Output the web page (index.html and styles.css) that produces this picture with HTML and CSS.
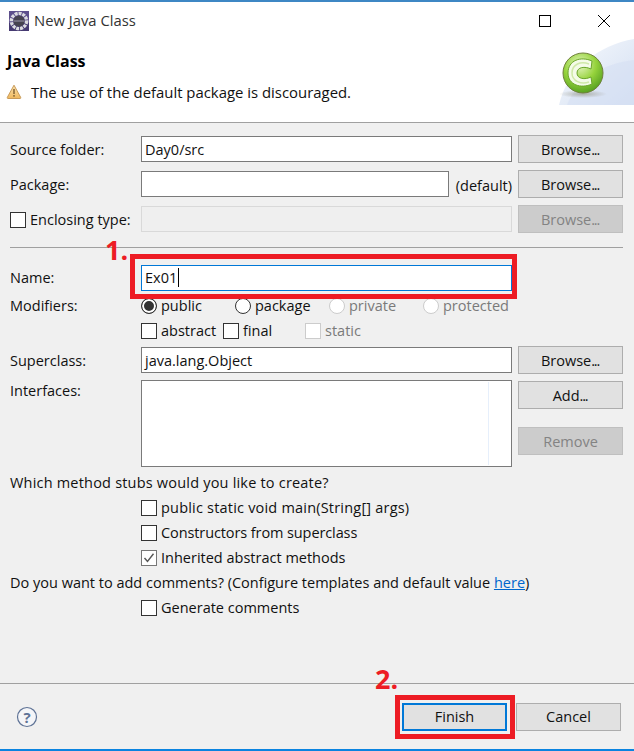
FILE: index.html
```html
<!DOCTYPE html>
<html lang="en">
<head>
<meta charset="utf-8">
<title>New Java Class</title>
<link rel="stylesheet" href="styles.css">
</head>
<body>
<div class="dialog">
  <div class="titlebar">
    <svg class="app-icon" width="20" height="20" viewBox="0 0 20 20">
      <rect width="20" height="20" fill="#5d4f8c"/>
      <rect y="12" width="20" height="8" fill="#463a72"/>
      <circle cx="10" cy="10" r="7.6" fill="none" stroke="#dcdce0" stroke-width="3.4" stroke-dasharray="3 0.9"/>
      <circle cx="10" cy="10" r="5.6" fill="#46434f"/>
      <rect x="4.5" y="9.5" width="11" height="1" fill="#9a96ac"/>
    </svg>
    <span class="title">New Java Class</span>
    <div class="win-controls">
      <svg width="14" height="14" viewBox="0 0 14 14"><rect x="1.5" y="1.5" width="11" height="11" fill="none" stroke="#000" stroke-width="1"/></svg>
      <svg width="14" height="14" viewBox="0 0 14 14"><path d="M1 1 L13 13 M13 1 L1 13" stroke="#000" stroke-width="1"/></svg>
    </div>
  </div>
  <header class="banner">
    <h1 class="banner-title">Java Class</h1>
    <div class="message">
      <svg width="16" height="16" viewBox="0 0 16 16">
        <defs><linearGradient id="warn" x1="0" y1="0" x2="0" y2="1"><stop offset="0" stop-color="#fbe3b0"/><stop offset="1" stop-color="#efb75c"/></linearGradient></defs>
        <path d="M8 1.2 L14.7 13.4 Q15 14.5 14 14.5 H2 Q1 14.5 1.3 13.4 Z" fill="url(#warn)" stroke="#c89a58" stroke-width="1"/>
        <rect x="7.2" y="5" width="1.6" height="5" fill="#8a6a3a"/>
        <rect x="7.2" y="11" width="1.6" height="1.7" fill="#8a6a3a"/>
      </svg>
      <span>The use of the default package is discouraged.</span>
    </div>
    <svg class="banner-art" width="75" height="67" viewBox="0 0 75 67">
      <defs>
        <linearGradient id="wash" x1="0" y1="0" x2="1" y2="1"><stop offset="0" stop-color="#f8fafd"/><stop offset="1" stop-color="#d3dff2"/></linearGradient>
        <radialGradient id="ball" cx="0.42" cy="0.3" r="0.8"><stop offset="0" stop-color="#e6f6c4"/><stop offset="0.5" stop-color="#96d33c"/><stop offset="1" stop-color="#45931a"/></radialGradient>
        <radialGradient id="shadow"><stop offset="0" stop-color="#9a9a8c" stop-opacity=".7"/><stop offset="1" stop-color="#9a9a8c" stop-opacity="0"/></radialGradient>
      </defs>
      <path d="M0 66 C8 30 40 6 75 0 V66 Z" fill="url(#wash)"/>
      <path d="M8 66 C18 40 45 24 75 21 V66 Z" fill="#d5e0f3" opacity=".6"/>
      <ellipse cx="24" cy="55" rx="24" ry="4" fill="url(#shadow)"/>
      <circle cx="24" cy="34" r="20" fill="url(#ball)" stroke="#6f7f3c" stroke-width="1"/>
      <path d="M33 22 C22 17 9 21 9 34 C9 46 22 50 33 45 L32 38 C26 41 18 40 18 34 C18 28 26 27 32 30 Z" fill="#f4fbe8" stroke="#6aa52a" stroke-width="1"/>
      <path d="M30 25 C22 22 13 25 13 34 C13 42 22 46 30 43" fill="none" stroke="#cfe9a8" stroke-width="1.5"/>
    </svg>
  </header>

  <main class="content">
    <div class="row row-first">
      <span class="label">Source folder:</span>
      <div class="field">Day0/src</div>
      <div class="btn">Browse<span class="dots">...</span></div>
    </div>
    <div class="row">
      <span class="label">Package:</span>
      <div class="field-split">
        <div class="field field-fill"></div>
        <span class="suffix">(default)</span>
      </div>
      <div class="btn">Browse<span class="dots">...</span></div>
    </div>
    <div class="row">
      <label class="label label-check"><span class="check"></span>Enclosing type:</label>
      <div class="field field-disabled"></div>
      <div class="btn btn-disabled">Browse<span class="dots">...</span></div>
    </div>
    <hr class="sep">
    <div class="row row-name">
      <span class="label label-flat">Name:</span>
      <div class="field field-focus">Ex01<span class="caret"></span></div>
    </div>
    <div class="row row-short row-mod">
      <span class="label label-flat">Modifiers:</span>
      <div class="options options-radio">
        <span class="opt"><span class="radio radio-on"></span>public</span>
        <span class="opt"><span class="radio"></span>package</span>
        <span class="opt opt-off"><span class="radio"></span>private</span>
        <span class="opt opt-off"><span class="radio"></span>protected</span>
      </div>
    </div>
    <div class="row row-short">
      <span></span>
      <div class="options options-check">
        <span class="opt"><span class="check"></span>abstract</span>
        <span class="opt"><span class="check"></span>final</span>
        <span class="opt opt-off"><span class="check"></span>static</span>
      </div>
    </div>
    <div class="row row-super">
      <span class="label">Superclass:</span>
      <div class="field">java.lang.Object</div>
      <div class="btn">Browse<span class="dots">...</span></div>
    </div>
    <div class="row row-iface">
      <span class="label label-top">Interfaces:</span>
      <div class="field field-list"><span class="list-rule"></span></div>
      <div class="btn-col">
        <div class="btn">Add<span class="dots">...</span></div>
        <div class="btn btn-disabled">Remove</div>
      </div>
    </div>
    <div class="line line-wide">Which method stubs would you like to create?</div>
    <div class="line line-opt line-wide"><span class="opt"><span class="check"></span>public static void main(String[] args)</span></div>
    <div class="line line-opt line-tight"><span class="opt"><span class="check"></span>Constructors from superclass</span></div>
    <div class="line line-opt"><span class="opt"><span class="check check-on"><svg width="14" height="14" viewBox="0 0 14 14"><path d="M2.5 7 L5.5 10.5 L11.5 2.8" fill="none" stroke="#555" stroke-width="1.4"/></svg></span>Inherited abstract methods</span></div>
    <div class="line">Do you want to add comments? (Configure templates and default value <a class="link" href="#">here</a>)</div>
    <div class="line line-opt"><span class="opt"><span class="check"></span>Generate comments</span></div>
  </main>

  <footer class="footer">
    <svg width="22" height="22" viewBox="0 0 22 22">
      <circle cx="11" cy="11" r="9.5" fill="#f4f5f8" stroke="#5f7396" stroke-width="1.2"/>
      <text class="help-mark" x="11" y="16.5" text-anchor="middle">?</text>
    </svg>
    <div class="footer-btns">
      <div class="btn btn-default">Finish</div>
      <div class="btn">Cancel</div>
    </div>
  </footer>

  <div class="mark mark-one">1.</div>
  <div class="box box-one"></div>
  <div class="mark mark-two">2.</div>
  <div class="box box-two"></div>
</div>
</body>
</html>
```
FILE: styles.css
```css
* { box-sizing: border-box; }
html, body { margin: 0; padding: 0; }
body {
  width: 634px;
  height: 751px;
  overflow: hidden;
  background: #f0f0f0;
  font-family: "Open Sans", "Noto Sans", sans-serif;
  font-size: 14.5px;
  color: #111;
}
.dialog {
  position: relative;
  width: 634px;
  height: 751px;
  display: flex;
  flex-direction: column;
  border-top: 2px solid #3d87c4;
  border-bottom: 2px solid #0a84e0;
}
.titlebar {
  height: 37px;
  flex: none;
  display: flex;
  align-items: center;
  padding-left: 9px;
  background: #fff;
  gap: 5px;
}
.title { font-size: 14.8px; color: #333; padding-bottom: 2px; }
.win-controls {
  margin-left: auto;
  margin-right: 23px;
  display: flex;
  gap: 45px;
}
.banner {
  position: relative;
  height: 84px;
  flex: none;
  padding: 11px 0 0 7px;
  background: #fff;
  border-bottom: 1px solid #a0a0a0;
}
.banner-title {
  margin: 0;
  font-size: 16px;
  font-weight: 700;
  line-height: 22px;
  color: #000;
}
.message {
  display: flex;
  align-items: center;
  gap: 9px;
  margin: 9px 0 0 -1px;
  line-height: 22px;
  font-size: 14.9px;
}
.banner-art {
  position: absolute;
  right: 0;
  top: 0;
}
.content {
  flex: none;
  padding: 12px 11px 0 10px;
  display: flex;
  flex-direction: column;
}
.row {
  display: grid;
  grid-template-columns: 131px 371px 111px;
  height: 28px;
  margin-bottom: 7px;
  align-items: center;
}
.row > .btn, .row > .btn-col { margin-left: 6px; width: 105px; }
.label { display: flex; align-items: center; line-height: 20px; padding-top: 2px; }
.label-flat { padding: 0; }
.label-check { gap: 4px; }
.label-top { align-self: start; padding-top: 1px; }
.suffix { padding-top: 2px; }
.field {
  height: 26px;
  padding: 0 3px;
  line-height: 26px;
  background: #fff;
  border: 1px solid #7a7a7a;
  white-space: nowrap;
}
.field-split { display: flex; align-items: center; justify-content: space-between; }
.field-fill { width: 308px; }
.field-disabled { background: #efefef; border-color: #d9d9d9; }
.field-focus { border-color: #0078d7; line-height: 24px; }
.caret {
  display: inline-block;
  width: 1px;
  height: 19px;
  margin-left: 1px;
  background: #000;
  vertical-align: -4px;
}
.field-list { position: relative; height: 87px; }
.list-rule {
  position: absolute;
  left: 346px;
  top: 1px;
  bottom: 1px;
  width: 1px;
  background: #e6effb;
}
.btn {
  height: 28px;
  line-height: 28px;
  text-align: center;
  background: #e1e1e1;
  border: 1px solid #adadad;
  color: #111;
}
.dots { letter-spacing: -1.2px; margin-right: 1px; }
.btn-disabled { background: #cccccc; border-color: #bfbfbf; color: #838383; }
.btn-col { display: flex; flex-direction: column; gap: 18px; align-self: start; margin-top: 1px; }
.sep {
  width: 100%;
  height: 1px;
  margin: 7px 0 16px;
  border: 0;
  background: #a0a0a0;
}
.row-name { margin-bottom: 0; }
.row-short { height: 25px; margin-bottom: 0; }
.row-mod { margin-top: 1px; }
.row-super { margin: 3px 0 6px; }
.row-iface { height: 87px; margin-bottom: 3px; align-items: start; }
.options { display: grid; align-items: center; }
.options-radio { grid-template-columns: 94px 94px 94px 94px; }
.options-check { grid-template-columns: 82px 82px 82px; }
.opt { display: inline-flex; align-items: center; gap: 4px; white-space: nowrap; }
.opt-off { color: #7a7a7a; }
.check {
  flex: none;
  width: 16px;
  height: 16px;
  background: #fff;
  border: 1px solid #333;
  display: inline-flex;
  align-items: center;
  justify-content: center;
}
.check-on { border-color: #777; }
.opt-off .check { border-color: #ccc; }
.radio {
  flex: none;
  width: 16px;
  height: 16px;
  border-radius: 50%;
  background: #fff;
  border: 1px solid #333;
}
.opt-off .radio { border-color: #ccc; }
.radio-on {
  background: #333;
  box-shadow: inset 0 0 0 2px #fff;
}
.line {
  height: 25px;
  line-height: 25px;
  white-space: nowrap;
}
.line-wide { letter-spacing: 0.2px; }
.line-tight { letter-spacing: -0.1px; }
.line-opt { padding-left: 131px; display: flex; align-items: center; }
.link { color: #0066cc; text-decoration: underline; }
.footer {
  position: absolute;
  left: 0;
  right: 0;
  top: 681px;
  height: 66px;
  display: flex;
  padding: 22px 13px 0 16px;
  border-top: 1px solid #a0a0a0;
}
.help-mark { font-family: "Open Sans", sans-serif; font-size: 15px; font-weight: 700; fill: #5f7396; }
.footer-btns { margin-left: auto; display: flex; gap: 9px; margin-top: -3px; }
.footer-btns .btn { width: 105px; line-height: 26px; }
.footer-btns .btn-default { border: 2px solid #0078d7; line-height: 24px; }
.mark {
  position: absolute;
  font-family: "Open Sans", sans-serif;
  font-weight: 700;
  font-size: 27px;
  line-height: 30px;
  color: #ed1c24;
}
.mark-one { left: 105px; top: 233px; }
.mark-two { left: 375px; top: 662px; }
.box { position: absolute; border: 5px solid #ed1c24; }
.box-one { left: 130px; top: 252px; width: 387px; height: 45px; }
.box-two { left: 395px; top: 693px; width: 120px; height: 44px; }
```
